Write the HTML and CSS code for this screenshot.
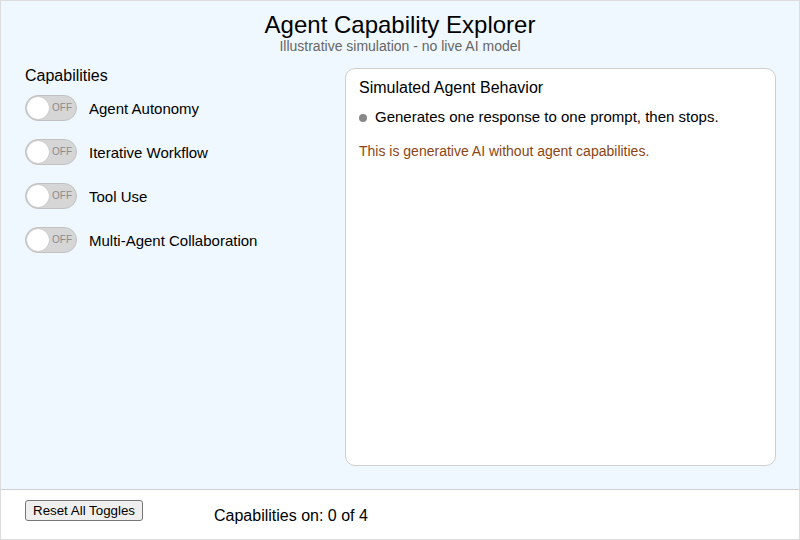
FILE: index.html
```html
<!DOCTYPE html>
<html lang="en">
<head>
    <meta charset="UTF-8">
    <meta name="viewport" content="width=device-width, initial-scale=1.0">
    <title>Agent Capability Explorer</title>
    <link rel="stylesheet" href="styles.css">
</head>
<body>
    <div class="app">
        <div class="stage">
            <h1 class="title">Agent Capability Explorer</h1>
            <p class="subtitle">Illustrative simulation - no live AI model</p>

            <div class="content">
                <div class="controls">
                    <h2 class="controlsTitle">Capabilities</h2>
                    <div class="toggleRow">
                        <span class="toggle"><span class="knob"></span><span class="state">OFF</span></span>
                        <span class="toggleLabel">Agent Autonomy</span>
                    </div>
                    <div class="toggleRow">
                        <span class="toggle"><span class="knob"></span><span class="state">OFF</span></span>
                        <span class="toggleLabel">Iterative Workflow</span>
                    </div>
                    <div class="toggleRow">
                        <span class="toggle"><span class="knob"></span><span class="state">OFF</span></span>
                        <span class="toggleLabel">Tool Use</span>
                    </div>
                    <div class="toggleRow">
                        <span class="toggle"><span class="knob"></span><span class="state">OFF</span></span>
                        <span class="toggleLabel">Multi-Agent Collaboration</span>
                    </div>
                </div>

                <div class="panel">
                    <h2 class="panelTitle">Simulated Agent Behavior</h2>
                    <ul class="behaviors">
                        <li>Generates one response to one prompt, then stops.</li>
                    </ul>
                    <p class="note">This is generative AI without agent capabilities.</p>
                </div>
            </div>
        </div>

        <div class="footer">
            <button class="resetBtn">Reset All Toggles</button>
            <span class="counter">Capabilities on: 0 of 4</span>
        </div>
    </div>
</body>
</html>
```

FILE: styles.css
```css
html {
    font-family: 'Liberation Sans', Arial, sans-serif;
}

body {
    margin: 0;
    background: #fff;
    color: #000;
}

.app {
    width: 800px;
    height: 540px;
    box-sizing: border-box;
    border: 1px solid #dcdcdc;
    display: flex;
    flex-direction: column;
}

.stage {
    height: 489px;
    flex-shrink: 0;
    background: #f0f8ff;
    border-bottom: 1px solid #cfcfcf;
    padding-top: 10px;
    box-sizing: border-box;
}

.title {
    margin: 0;
    font-size: 24px;
    font-weight: normal;
    line-height: 27px;
    text-align: center;
}

.subtitle {
    margin: 0;
    font-size: 14px;
    line-height: 16px;
    color: #666;
    text-align: center;
}

.content {
    display: flex;
    margin-top: 14px;
    padding-left: 24px;
}

.controls {
    width: 320px;
}

.controlsTitle {
    margin: 0 0 11px;
    font-size: 16px;
    font-weight: normal;
    line-height: 16px;
}

.toggleRow {
    display: flex;
    align-items: center;
    gap: 12px;
    margin-bottom: 18px;
}

.toggle {
    position: relative;
    width: 52px;
    height: 26px;
    box-sizing: border-box;
    border-radius: 13px;
    background: #d6d6d6;
    border: 1px solid #c2c2c2;
}

.knob {
    position: absolute;
    left: 1px;
    top: 1px;
    width: 22px;
    height: 22px;
    border-radius: 50%;
    background: #fff;
    box-shadow: 0 0 1px rgba(0, 0, 0, 0.25);
}

.state {
    position: absolute;
    right: 4px;
    top: 7px;
    font-size: 10px;
    line-height: 10px;
    color: #8c8c8c;
}

.toggleLabel {
    font-size: 15px;
}

.panel {
    width: 431px;
    height: 398px;
    box-sizing: border-box;
    background: #fff;
    border: 1px solid #cfcfcf;
    border-radius: 10px;
    padding: 9px 13px;
}

.panelTitle {
    margin: 0;
    font-size: 16px;
    font-weight: normal;
    line-height: 20px;
}

.behaviors {
    list-style: none;
    margin: 9px 0 0;
    padding: 0;
}

.behaviors li {
    position: relative;
    padding-left: 16px;
    font-size: 15px;
    line-height: 20px;
}

.behaviors li::before {
    content: '';
    position: absolute;
    left: 0;
    top: 7px;
    width: 8px;
    height: 8px;
    border-radius: 50%;
    background: #888;
}

.note {
    margin: 15px 0 0;
    font-size: 14px;
    line-height: 18px;
    color: #8b4513;
}

.footer {
    display: flex;
    align-items: flex-start;
    padding: 10px 0 0 24px;
}

.resetBtn {
    font-family: 'Liberation Sans', Arial, sans-serif;
    font-size: 13.33px;
    height: 21px;
    padding: 0 7px;
    background: #efefef;
    border: 1px solid #767676;
    border-radius: 3px;
    color: #000;
}

.counter {
    margin-left: 71px;
    margin-top: 7px;
    font-size: 16px;
    line-height: 18px;
}
```
